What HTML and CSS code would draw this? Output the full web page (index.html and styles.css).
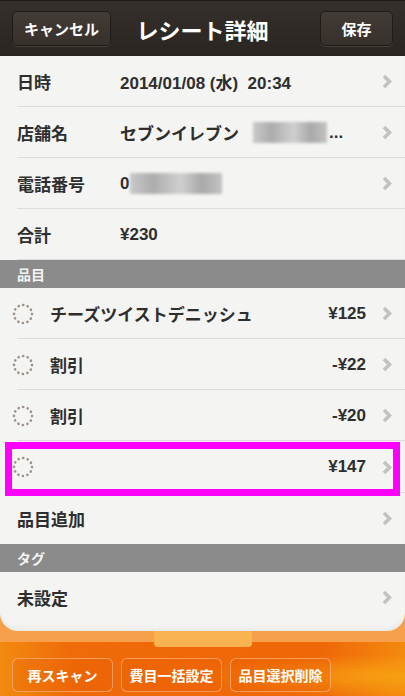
FILE: index.html
```html
<!DOCTYPE html>
<html lang="ja">
<head>
    <meta charset="UTF-8">
    <meta name="viewport" content="width=device-width, initial-scale=1.0">
    <title>レシート詳細</title>
    <link rel="stylesheet" href="styles.css">
</head>
<body>
    <!-- En-tête -->
    <header class="topbar">
        <button type="button" class="bar-btn cancel">キャンセル</button>
        <h1 class="title">レシート詳細</h1>
        <button type="button" class="bar-btn save">保存</button>
    </header>

    <div class="content">
        <div class="sheet">
            <!-- Infos -->
            <div class="row">
                <span class="label">日時</span>
                <span class="value">2014/01/08 (水)&nbsp;&nbsp;20:34</span>
                <span class="chev"><svg width="10" height="15" viewBox="0 0 10 15"><polyline points="2,2 7.5,7.5 2,13" fill="none" stroke="#c2c2c0" stroke-width="3.6"/></svg></span>
            </div>
            <div class="row">
                <span class="label">店舗名</span>
                <span class="value">セブンイレブン <span class="blur store"></span>...</span>
                <span class="chev"><svg width="10" height="15" viewBox="0 0 10 15"><polyline points="2,2 7.5,7.5 2,13" fill="none" stroke="#c2c2c0" stroke-width="3.6"/></svg></span>
            </div>
            <div class="row">
                <span class="label">電話番号</span>
                <span class="value">0<span class="blur phone"></span></span>
                <span class="chev"><svg width="10" height="15" viewBox="0 0 10 15"><polyline points="2,2 7.5,7.5 2,13" fill="none" stroke="#c2c2c0" stroke-width="3.6"/></svg></span>
            </div>
            <div class="row">
                <span class="label">合計</span>
                <span class="value">¥230</span>
            </div>

            <!-- Items -->
            <div class="section">品目</div>
            <div class="row item">
                <span class="dots"><svg width="22" height="22" viewBox="0 0 22 22"><circle cx="11" cy="11" r="9" fill="none" stroke="#9e9186" stroke-width="2.6" stroke-linecap="round" stroke-dasharray="0.1 4.6"/></svg></span>
                <span class="name">チーズツイストデニッシュ</span>
                <span class="price">¥125</span>
                <span class="chev"><svg width="10" height="15" viewBox="0 0 10 15"><polyline points="2,2 7.5,7.5 2,13" fill="none" stroke="#c2c2c0" stroke-width="3.6"/></svg></span>
            </div>
            <div class="row item">
                <span class="dots"><svg width="22" height="22" viewBox="0 0 22 22"><circle cx="11" cy="11" r="9" fill="none" stroke="#9e9186" stroke-width="2.6" stroke-linecap="round" stroke-dasharray="0.1 4.6"/></svg></span>
                <span class="name">割引</span>
                <span class="price">-¥22</span>
                <span class="chev"><svg width="10" height="15" viewBox="0 0 10 15"><polyline points="2,2 7.5,7.5 2,13" fill="none" stroke="#c2c2c0" stroke-width="3.6"/></svg></span>
            </div>
            <div class="row item">
                <span class="dots"><svg width="22" height="22" viewBox="0 0 22 22"><circle cx="11" cy="11" r="9" fill="none" stroke="#9e9186" stroke-width="2.6" stroke-linecap="round" stroke-dasharray="0.1 4.6"/></svg></span>
                <span class="name">割引</span>
                <span class="price">-¥20</span>
                <span class="chev"><svg width="10" height="15" viewBox="0 0 10 15"><polyline points="2,2 7.5,7.5 2,13" fill="none" stroke="#c2c2c0" stroke-width="3.6"/></svg></span>
            </div>
            <div class="row item marked">
                <span class="dots"><svg width="22" height="22" viewBox="0 0 22 22"><circle cx="11" cy="11" r="9" fill="none" stroke="#9e9186" stroke-width="2.6" stroke-linecap="round" stroke-dasharray="0.1 4.6"/></svg></span>
                <span class="name"></span>
                <span class="price">¥147</span>
                <span class="chev"><svg width="10" height="15" viewBox="0 0 10 15"><polyline points="2,2 7.5,7.5 2,13" fill="none" stroke="#c2c2c0" stroke-width="3.6"/></svg></span>
            </div>
            <div class="row last">
                <span class="label wide">品目追加</span>
                <span class="chev"><svg width="10" height="15" viewBox="0 0 10 15"><polyline points="2,2 7.5,7.5 2,13" fill="none" stroke="#c2c2c0" stroke-width="3.6"/></svg></span>
            </div>

            <!-- Tags -->
            <div class="section">タグ</div>
            <div class="row last">
                <span class="label wide">未設定</span>
                <span class="chev"><svg width="10" height="15" viewBox="0 0 10 15"><polyline points="2,2 7.5,7.5 2,13" fill="none" stroke="#c2c2c0" stroke-width="3.6"/></svg></span>
            </div>
        </div>
    </div>

    <!-- Barre du bas -->
    <footer class="bottombar">
        <div class="tab"></div>
        <div class="actions">
            <button type="button" class="act-btn">再スキャン</button>
            <button type="button" class="act-btn">費目一括設定</button>
            <button type="button" class="act-btn">品目選択削除</button>
        </div>
    </footer>
</body>
</html>
```

FILE: styles.css
```css
body {
    margin: 0;
    width: 405px;
    height: 696px;
    overflow: hidden;
    display: flex;
    flex-direction: column;
    font-family: "Liberation Sans", "Noto Sans CJK JP", sans-serif;
    background-color: #ef6a08;
}

/* header */
.topbar {
    height: 56px;
    box-sizing: border-box;
    padding: 0 12px;
    display: grid;
    grid-template-columns: 1fr auto 1fr;
    align-items: center;
    background: linear-gradient(#35302b, #2a2521);
    border-top: 1px solid #1c1815;
}

.title {
    margin: 0;
    color: #fff;
    font-size: 22px;
    font-weight: 700;
}

.bar-btn {
    height: 35px;
    padding: 0 10px;
    border: 1px solid #1f1b18;
    border-radius: 5px;
    background: linear-gradient(#433b35, #37302b);
    box-shadow: 0 1px 0 rgba(255, 255, 255, 0.12);
    color: #fff;
    font-family: inherit;
    font-size: 15px;
    font-weight: 700;
}

.bar-btn.cancel {
    justify-self: start;
    width: 99px;
}

.bar-btn.save {
    justify-self: end;
    width: 73px;
}

/* list */
.content {
    background-color: #f6a04c;
}

.sheet {
    background-color: #f4f4f2;
    border-radius: 0 0 18px 18px;
    padding-bottom: 8px;
    box-shadow: inset 0 -6px 6px -4px rgba(0, 0, 0, 0.06);
}

.row {
    position: relative;
    height: 51px;
    box-sizing: border-box;
    padding: 0 13px 0 17px;
    display: flex;
    align-items: center;
    color: #2e2e2e;
    background: linear-gradient(#dcdcda, #dcdcda) no-repeat left 17px bottom / calc(100% - 17px) 1px;
}

.row.last {
    background: none;
}

.label {
    width: 103px;
    font-size: 17px;
    font-weight: 700;
}

.label.wide {
    width: auto;
    flex: 1;
}

.value {
    flex: 1;
    display: flex;
    align-items: center;
    font-size: 17px;
    font-weight: 700;
    white-space: nowrap;
}

.blur {
    display: inline-block;
    height: 21px;
    background: linear-gradient(90deg, #c9c9c9, #acacac 25%, #c4c4c4 45%, #cfcfcf 55%, #a9a9a9 78%, #c2c2c2);
    filter: blur(1.5px);
}

.blur.store {
    width: 74px;
    margin: 0 2px 0 14px;
}

.blur.phone {
    width: 92px;
    margin-left: 1px;
}

.chev {
    display: flex;
    margin-left: auto;
}

.item {
    padding-left: 12px;
}

.dots {
    display: flex;
    width: 38px;
}

.name {
    flex: 1;
    font-size: 17px;
    font-weight: 700;
}

.price {
    margin-right: 16px;
    font-size: 17px;
    font-weight: 700;
}

.item .chev {
    margin-left: 0;
}

.marked {
    height: 52px;
}

.marked::after {
    content: "";
    position: absolute;
    top: 1px;
    left: 5px;
    right: 5px;
    bottom: -3px;
    border: 7px solid #ff00ff;
}

.section {
    height: 28px;
    box-sizing: border-box;
    padding: 0 17px;
    display: flex;
    align-items: center;
    background-color: #8b8b8b;
    color: #f4f4f4;
    font-size: 14px;
    font-weight: 700;
}

/* footer */
.bottombar {
    flex: 1;
    background:
        linear-gradient(#f6a04c, #f6a04c) no-repeat top / 100% 11px,
        radial-gradient(ellipse at 100% 70%, #f7a012 0, rgba(247, 160, 18, 0) 35%),
        linear-gradient(90deg, #f28a10, #ef6a08 18%, #ef6808 80%, #f38a0e);
}

.tab {
    width: 98px;
    height: 16px;
    margin: 0 auto;
    background-color: #f8b450;
    border-radius: 0 0 4px 4px;
}

.actions {
    display: flex;
    gap: 8px;
    padding: 11px 12px 0;
}

.act-btn {
    width: 101px;
    height: 34px;
    border: 1px solid rgba(255, 200, 160, 0.55);
    border-radius: 6px;
    background-color: rgba(230, 90, 0, 0.25);
    color: #fff;
    font-family: inherit;
    font-size: 14px;
    font-weight: 700;
}
```
